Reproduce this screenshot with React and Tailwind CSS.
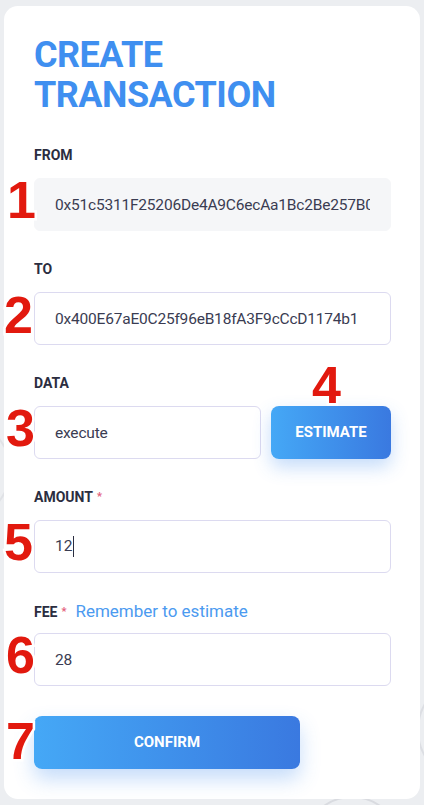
import React from "react";

const font = { fontFamily: "Roboto, 'Noto Sans', sans-serif" };

const Num = ({ n, className }) => (
    <span
        className={`absolute font-bold text-[52px] leading-none text-[#e2190e] [paint-order:stroke_fill] [-webkit-text-stroke:5px_white] ${className}`}
        style={{ fontFamily: "'Liberation Sans', Arial, sans-serif" }}
    >
        {n}
    </span>
);

const Label = ({ children, required }) => (
    <div className="text-[14px] leading-4 font-bold text-[#2b2d40]">
        {children}
        {required && <span className="ml-1 text-[#e3607a] text-[11px] align-top">*</span>}
    </div>
);

const Field = ({ value, muted }) => (
    <input
        readOnly
        value={value}
        className={`w-full h-[53px] rounded-md px-5 text-[15.5px] tracking-[-0.2px] text-[#3a3c52] outline-none ${
            muted ? "bg-[#f5f6f8] border border-[#f5f6f8]" : "bg-white border border-[#dcdaf0]"
        }`}
        style={font}
    />
);

export default function App() {
    return (
        <div className="relative min-h-[805px] bg-[#eceef1] pt-[6px] px-[4px] overflow-hidden" style={font}>
            {/* faint background pattern */}
            <svg className="absolute inset-0 w-full h-full" viewBox="0 0 424 805" fill="none">
                <circle cx="352" cy="845" r="48" stroke="#d9dbe0" strokeWidth="2" />
                <circle cx="470" cy="730" r="52" stroke="#dcdee3" strokeWidth="2" />
                <circle cx="-40" cy="470" r="50" stroke="#e0e2e6" strokeWidth="2" />
            </svg>

            <div className="relative bg-white rounded-[14px] pt-[29px] pb-[30px] pl-[30px] pr-[29px]">
                <h1 className="text-[36px] leading-[40px] font-bold text-[#3f8ff0] tracking-[-0.5px]">
                    CREATE
                    <br />
                    TRANSACTION
                </h1>

                <div className="mt-[32px]">
                    <Label>FROM</Label>
                    <div className="relative mt-[15px]">
                        <Num n="1" className="left-[-27px] top-[-4px]" />
                        <Field value="0x51c5311F25206De4A9C6ecAa1Bc2Be257B0a35d7" muted />
                    </div>
                </div>

                <div className="mt-[30px]">
                    <Label>TO</Label>
                    <div className="relative mt-[15px]">
                        <Num n="2" className="left-[-30px] top-[-3px]" />
                        <Field value="0x400E67aE0C25f96eB18fA3F9cCcD1174b1" />
                    </div>
                </div>

                <div className="mt-[30px]">
                    <Label>DATA</Label>
                    <div className="relative mt-[15px] flex gap-[10px]">
                        <Num n="3" className="left-[-28px] top-[-4px]" />
                        <Num n="4" className="left-[278px] top-[-47px]" />
                        <div className="w-[227px]">
                            <Field value="execute" />
                        </div>
                        <button className="flex-1 h-[53px] rounded-lg bg-gradient-to-r from-[#45a8f6] to-[#3a79e0] text-white text-[15px] font-bold shadow-[0_8px_18px_rgba(64,140,240,0.3)]">
                            ESTIMATE
                        </button>
                    </div>
                </div>

                <div className="mt-[30px]">
                    <Label required>AMOUNT</Label>
                    <div className="relative mt-[15px]">
                        <Num n="5" className="left-[-30px] top-[-4px]" />
                        <div className="w-full h-[53px] rounded-md px-5 flex items-center bg-white border border-[#dcdaf0] text-[15.5px] text-[#3a3c52]">
                            12<span className="ml-px w-px h-[21px] bg-[#2b2d40]" />
                        </div>
                    </div>
                </div>

                <div className="mt-[30px] h-4 flex items-baseline gap-[9px]">
                    <Label required>FEE</Label>
                    <span className="text-[17px] leading-4 text-[#4b9af0]">Remember to estimate</span>
                </div>
                <div className="relative mt-[14px]">
                    <Num n="6" className="left-[-28px] top-[-4px]" />
                    <Field value="28" />
                </div>

                <div className="relative mt-[30px]">
                    <Num n="7" className="left-[-28px] top-[-1px]" />
                    <button className="w-[266px] h-[53px] rounded-lg bg-gradient-to-r from-[#45a8f6] to-[#3a79e0] text-white text-[15px] font-bold shadow-[0_10px_20px_rgba(64,140,240,0.3)]">
                        CONFIRM
                    </button>
                </div>
            </div>
        </div>
    );
}
